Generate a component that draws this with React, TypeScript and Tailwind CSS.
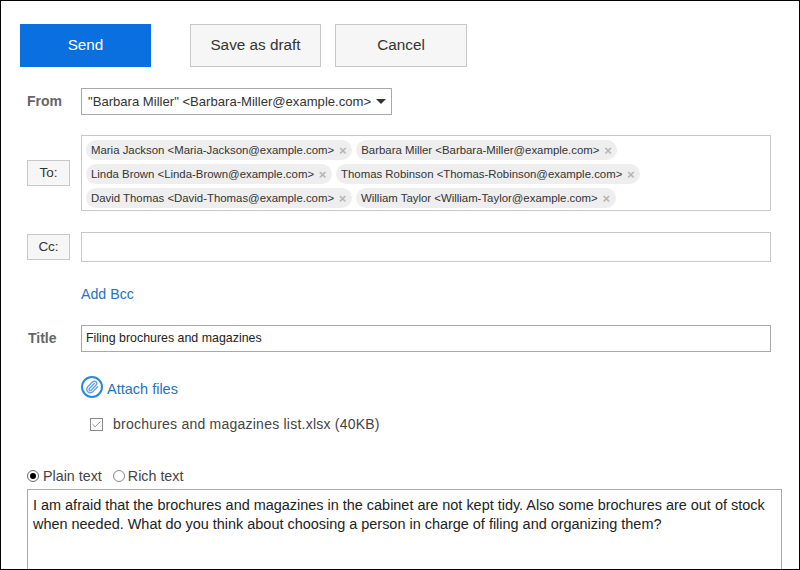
import { Paperclip, Check } from "lucide-react";

const rows = [
  ["Maria Jackson <Maria-Jackson@example.com>", "Barbara Miller <Barbara-Miller@example.com>"],
  ["Linda Brown <Linda-Brown@example.com>", "Thomas Robinson <Thomas-Robinson@example.com>"],
  ["David Thomas <David-Thomas@example.com>", "William Taylor <William-Taylor@example.com>"],
];

function Chip({ label }: { label: string }) {
  return (
    <span className="flex h-[20px] items-center whitespace-nowrap rounded-[10px] bg-[#eeeeee] pl-[5px] pr-[5px] pt-[1px] text-[11.4px] text-[#333333]">
      {label}
      <span className="ml-[4px] w-[9px] text-center text-[13px] font-bold leading-none text-[#b5b5b5]">×</span>
    </span>
  );
}

export default function App() {
  return (
    <div className="h-[570px] w-[800px] overflow-hidden border border-black bg-white font-['Liberation_Sans',Arial,sans-serif] text-[#333333]">
      {/* Buttons */}
      <div className="ml-[19px] mt-[23px] flex">
        <button className="h-[43px] w-[131px] bg-[#0a6fdf] text-[15.3px] text-white">Send</button>
        <button className="ml-[39px] h-[43px] w-[131px] border border-[#c8c8c8] bg-[#f6f6f6] text-[15.3px]">Save as draft</button>
        <button className="ml-[14px] h-[43px] w-[132px] border border-[#c8c8c8] bg-[#f6f6f6] text-[15.3px]">Cancel</button>
      </div>

      {/* From */}
      <div className="mt-[21px] flex h-[27px] items-center">
        <span className="ml-[26px] w-[54px] text-[14px] font-bold text-[#666666]">From</span>
        <div className="flex h-[27px] w-[311px] items-center whitespace-nowrap border border-[#a9a9a9] pl-[6px] text-[13.1px]">
          <span>"Barbara Miller" &lt;Barbara-Miller@example.com&gt;</span>
          <span className="ml-[5px] h-0 w-0 border-x-[5px] border-t-[5px] border-x-transparent border-t-[#333333]" />
        </div>
      </div>

      {/* To */}
      <div className="mt-[20px] flex items-center">
        <button className="ml-[26px] h-[26px] w-[43px] border border-[#c8c8c8] bg-[#f6f6f6] text-[13.5px]">To:</button>
        <div className="ml-[11px] flex h-[76px] w-[690px] flex-col gap-[4px] border border-[#c8c8c8] pl-[4px] pt-[4px]">
          {rows.map((row) => (
            <div key={row[0]} className="flex gap-[4px]">
              {row.map((label) => (
                <Chip key={label} label={label} />
              ))}
            </div>
          ))}
        </div>
      </div>

      {/* Cc */}
      <div className="mt-[21px] flex items-center">
        <button className="ml-[26px] h-[26px] w-[43px] border border-[#c8c8c8] bg-[#f6f6f6] text-[13.5px]">Cc:</button>
        <div className="ml-[11px] h-[30px] w-[690px] border border-[#c8c8c8]" />
      </div>

      <div className="ml-[80px] mt-[23px] text-[14.2px] leading-[18px] text-[#2a71bd]">Add Bcc</div>

      {/* Title */}
      <div className="mt-[22px] flex items-center">
        <span className="ml-[27px] w-[53px] text-[14px] font-bold text-[#666666]">Title</span>
        <div className="flex h-[27px] w-[690px] items-center border border-[#a9a9a9] pl-[4px] text-[12.4px] text-[#222222]">
          Filing brochures and magazines
        </div>
      </div>

      {/* Attachments */}
      <div className="ml-[80px] mt-[24px] flex items-center text-[14.5px] text-[#2a71bd]">
        <span className="flex h-[22px] w-[22px] items-center justify-center rounded-full border-2 border-[#2b86e0]">
          <Paperclip size={14} strokeWidth={2.5} className="text-[#6aa5e6]" />
        </span>
        <span className="ml-[4px] mt-[3px] leading-[16px]">Attach files</span>
      </div>
      <div className="ml-[89px] mt-[17px] flex items-center text-[14px] leading-[18px] text-[#444444]">
        <span className="flex h-[13px] w-[13px] items-center justify-center border border-[#888888]">
          <Check size={13} strokeWidth={1.5} className="text-[#555555]" />
        </span>
        <span className="ml-[10px] tracking-[0.23px]">brochures and magazines list.xlsx (40KB)</span>
      </div>

      {/* Format */}
      <div className="ml-[26px] mt-[34px] flex items-center text-[14.3px] leading-[18px] text-[#444444]">
        <span className="flex h-[12px] w-[12px] items-center justify-center rounded-full border border-[#666666]">
          <span className="h-[6px] w-[6px] rounded-full bg-black" />
        </span>
        <span className="ml-[4px]">Plain text</span>
        <span className="ml-[11px] h-[12px] w-[12px] rounded-full border border-[#888888]" />
        <span className="ml-[3px]">Rich text</span>
      </div>

      {/* Body */}
      <div className="ml-[26px] mt-[4px] h-[100px] w-[755px] border border-[#a9a9a9] pl-[5px] pr-[5px] pt-[6px] text-[14.45px] leading-[19px] text-[#222222]">
        I am afraid that the brochures and magazines in the cabinet are not kept tidy. Also some brochures are out of stock when needed. What do you think about choosing a person in charge of filing and organizing them?
      </div>
    </div>
  );
}
